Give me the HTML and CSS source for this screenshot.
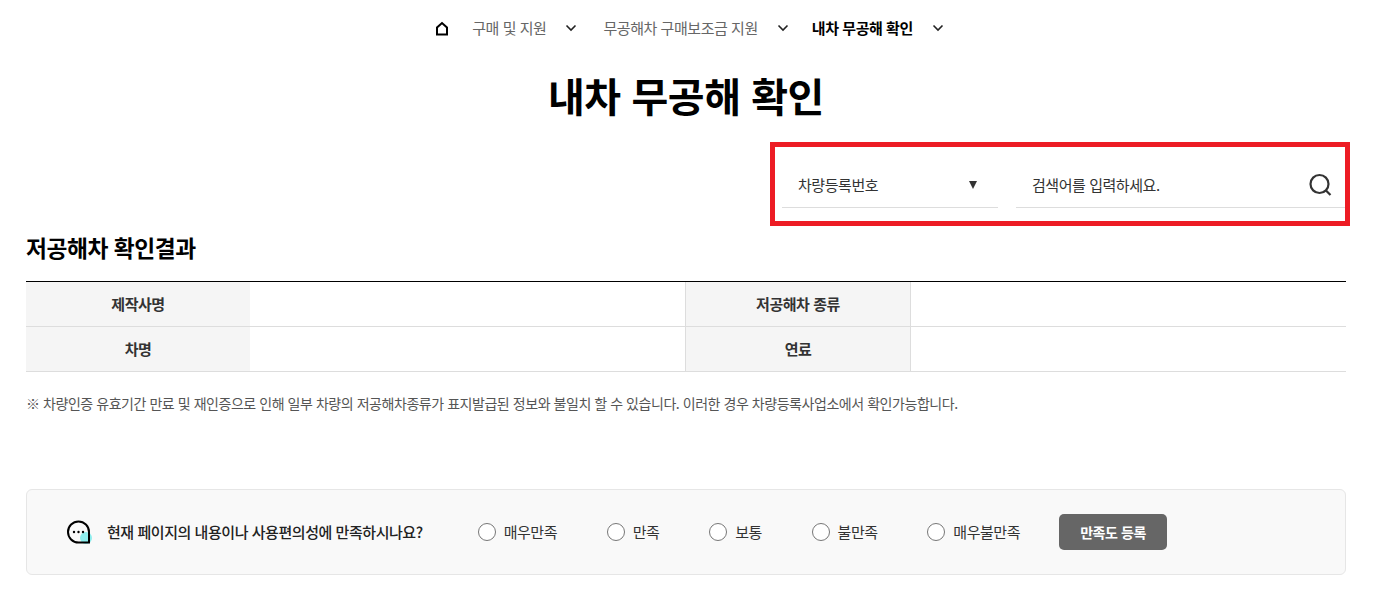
FILE: index.html
```html
<!DOCTYPE html>
<html lang="ko">
<head>
<meta charset="utf-8">
<title>내차 무공해 확인</title>
<link rel="stylesheet" href="styles.css">
</head>
<body>
<nav class="crumbs">
  <svg class="home" width="14" height="15" viewBox="0 0 14 15"><path d="M2 13.500V6.500L7 2l5 4.500v7z" fill="none" stroke="#000" stroke-width="2"/></svg>
  <span class="crumb crumb-first">구매 및 지원</span>
  <svg class="chev" width="12" height="8" viewBox="0 0 12 8"><path d="M1.500 1.500 6 6l4.500-4.500" fill="none" stroke="#222" stroke-width="1.600"/></svg>
  <span class="crumb crumb-second">무공해차 구매보조금 지원</span>
  <svg class="chev" width="12" height="8" viewBox="0 0 12 8"><path d="M1.500 1.500 6 6l4.500-4.500" fill="none" stroke="#222" stroke-width="1.600"/></svg>
  <span class="crumb crumb-current">내차 무공해 확인</span>
  <svg class="chev" width="12" height="8" viewBox="0 0 12 8"><path d="M1.500 1.500 6 6l4.500-4.500" fill="none" stroke="#222" stroke-width="1.600"/></svg>
</nav>
<h1 class="title">내차 무공해 확인</h1>
<div class="search-row">
  <div class="search-box">
    <div class="select"><span>차량등록번호</span><i class="caret"></i></div>
    <div class="input"><span>검색어를 입력하세요.</span>
      <svg width="24" height="24" viewBox="0 0 24 24"><circle cx="11.500" cy="11" r="9" fill="none" stroke="#333" stroke-width="2.200"/><path d="m18 17.500 4.500 4.500" stroke="#333" stroke-width="2.200"/></svg>
    </div>
  </div>
</div>
<h2 class="subtitle">저공해차 확인결과</h2>
<div class="result">
  <div class="th">제작사명</div><div class="td"></div><div class="th th-side">저공해차 종류</div><div class="td td-side"></div>
  <div class="th">차명</div><div class="td"></div><div class="th th-side">연료</div><div class="td td-side"></div>
</div>
<p class="note">※ 차량인증 유효기간 만료 및 재인증으로 인해 일부 차량의 저공해차종류가 표지발급된 정보와 불일치 할 수 있습니다. 이러한 경우 차량등록사업소에서 확인가능합니다.</p>
<section class="survey">
  <svg class="bubble" width="26" height="26" viewBox="0 0 26 26"><circle cx="20" cy="19" r="6" fill="#8eeeee"/><path d="M12.500 2.500a10.500 10.500 0 1 0 0 21H23V13A10.500 10.500 0 0 0 12.500 2.500z" fill="none" stroke="#000" stroke-width="2"/><circle cx="8" cy="13" r="1.200"/><circle cx="12.500" cy="13" r="1.200"/><circle cx="17" cy="13" r="1.200"/></svg>
  <strong class="question">현재 페이지의 내용이나 사용편의성에 만족하시나요?</strong>
  <label class="opt opt-first"><i class="radio"></i>매우만족</label>
  <label class="opt"><i class="radio"></i>만족</label>
  <label class="opt"><i class="radio"></i>보통</label>
  <label class="opt"><i class="radio"></i>불만족</label>
  <label class="opt"><i class="radio"></i>매우불만족</label>
  <button class="submit">만족도 등록</button>
</section>
</body>
</html>
```
FILE: styles.css
```css
* { box-sizing: border-box; }
html, body { margin: 0; padding: 0; }
body {
  background: #fff;
  color: #222;
  font-family: "Noto Sans CJK KR", "Noto Sans", sans-serif;
  font-size: 15px;
  letter-spacing: -0.03em;
  padding: 0 27px 0 26px;
  height: 595px;
  overflow: hidden;
}
.crumbs {
  display: flex;
  align-items: center;
  justify-content: center;
  height: 56px;
  padding-left: 7px;
}
.home { margin-right: 23px; }
.crumb { color: #666; margin-top: -2px; }
.crumb-first { margin-right: 19px; }
.crumb-second { margin-left: 26px; margin-right: 19px; }
.crumb-current { margin-left: 23px; margin-right: 19px; color: #000; font-weight: 700; }
.title {
  margin: 12px 0 0;
  text-align: center;
  font-size: 40px;
  line-height: 54px;
  font-weight: 700;
  color: #000;
}
.search-row { display: flex; justify-content: flex-end; margin: 20px -4px 0 0; }
.search-box {
  width: 580px;
  height: 84px;
  border: 5px solid #ed1c24;
  display: flex;
  padding: 0 0 0 7px;
  gap: 18px;
}
.select, .input {
  height: 61px;
  border-bottom: 1px solid #ddd;
  display: flex;
  align-items: center;
  padding-top: 15px;
  color: #333;
}
.select { width: 216px; padding-left: 16px; padding-right: 21px; justify-content: space-between; }
.input { width: 329px; padding-left: 16px; padding-right: 13px; justify-content: space-between; }
.caret { width: 0; height: 0; border-left: 4.500px solid transparent; border-right: 4.500px solid transparent; border-top: 8px solid #333; }
.subtitle { margin: 6px 0 0; font-size: 22.750px; line-height: 32px; font-weight: 700; color: #000; }
.result {
  margin-top: 17px;
  border-top: 1px solid #000;
  display: grid;
  grid-template-columns: 224px 435px 225px 436px;
  grid-auto-rows: 45px;
}
.th, .td { border-bottom: 1px solid #ddd; display: flex; align-items: center; justify-content: center; padding-bottom: 2px; }
.th { background: #f5f5f5; font-weight: 700; color: #333; }
.th-side, .td-side { border-left: 1px solid #ddd; }
.note { margin: 20px 0 0; font-size: 14px; line-height: 22px; color: #555; }
.survey {
  margin-top: 75px;
  height: 86px;
  border: 1px solid #e6e6e6;
  border-radius: 6px;
  background: #f9f9f9;
  display: flex;
  align-items: center;
  padding-left: 39px;
}
.bubble { margin-right: 15px; flex: none; }
.question { font-weight: 500; color: #222; margin-top: -2px; }
.opt { display: flex; align-items: center; color: #333; margin-left: 49.700px; line-height: 22px; }
.opt-first { margin-left: 55px; }
.radio { width: 18px; height: 18px; border: 1px solid #777; border-radius: 50%; background: #fff; margin-right: 8px; }
.submit {
  margin-left: 39px;
  width: 108px;
  height: 36px;
  border: 0;
  border-radius: 5px;
  background: #666;
  color: #fff;
  font: 700 14px "Noto Sans CJK KR", sans-serif;
  letter-spacing: -0.03em;
}
```
